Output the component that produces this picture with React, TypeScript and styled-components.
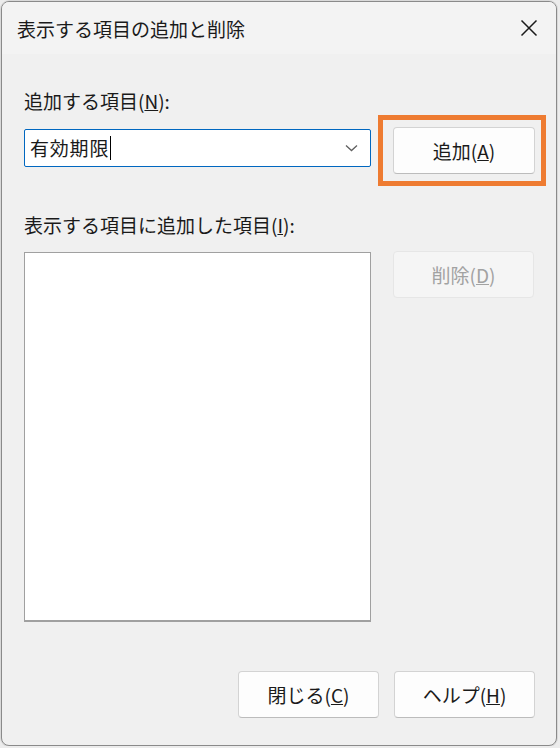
import React from "react";
import styled, { createGlobalStyle } from "styled-components";

const Global = createGlobalStyle`
  html, body { margin: 0; padding: 0; background: #ececec; }
  body { font-family: "Noto Sans CJK JP", "Noto Sans", sans-serif; color: #1b1b1b; }
  * { box-sizing: border-box; }
`;

const Window = styled.div`
  margin: 1px 0 0 1px;
  width: 556px;
  height: 745px;
  border: 1px solid #8a8a8a;
  border-radius: 8px;
  background: #f0f0f0;
  overflow: hidden;
  display: flex;
  flex-direction: column;
  box-shadow: 0 0 0 1px rgba(0, 0, 0, 0.08);
`;

const TitleBar = styled.div`
  height: 52px;
  flex: none;
  display: flex;
  align-items: center;
  justify-content: space-between;
  padding: 0 18px 0 15px;
  background: #f3f3f3;
`;

const Title = styled.div`
  font-size: 19px;
  line-height: 26px;
  color: #1a1a1a;
  margin-top: 2px;
`;

const CloseIcon = styled.svg`
  width: 18px;
  height: 18px;
  display: block;
`;

const Content = styled.div`
  padding: 0 20px 0 22px;
  display: flex;
  flex-direction: column;
`;

const Label = styled.div<{ $top: number }>`
  margin-top: ${(p) => p.$top}px;
  font-size: 19px;
  line-height: 26px;
  color: #1a1a1a;
  white-space: nowrap;
`;

const Row = styled.div<{ $top: number }>`
  margin-top: ${(p) => p.$top}px;
  display: grid;
  grid-template-columns: 347px 142px;
  column-gap: 22px;
  align-items: start;
`;

const Combo = styled.div`
  margin-top: 2px;
  height: 38px;
  background: #ffffff;
  border: 1px solid #0067c0;
  border-radius: 2px;
  display: flex;
  align-items: center;
  padding: 0 12px 0 5px;
`;

const ComboText = styled.div`
  flex: 1;
  font-size: 19px;
  line-height: 26px;
  letter-spacing: 0.8px;
  color: #1a1a1a;
  display: flex;
  align-items: center;
`;

const Caret = styled.span`
  display: inline-block;
  width: 1px;
  height: 24px;
  background: #000;
  margin-left: 1px;
`;

const Chevron = styled.svg`
  width: 13px;
  height: 8px;
  display: block;
`;

const HighlightWrap = styled.div`
  position: relative;
`;

const Highlight = styled.div`
  position: absolute;
  left: -15px;
  top: -12px;
  right: -11px;
  bottom: -12px;
  border: 5px solid #ee7b31;
  pointer-events: none;
`;

const Button = styled.button<{ $disabled?: boolean }>`
  width: 141px;
  height: 47px;
  font-family: inherit;
  font-size: 19px;
  line-height: 26px;
  padding: 0;
  border-radius: 4px;
  border: 1px solid ${(p) => (p.$disabled ? "#e6e6e6" : "#d3d3d3")};
  border-bottom-color: ${(p) => (p.$disabled ? "#e6e6e6" : "#bcbcbc")};
  background: ${(p) => (p.$disabled ? "#f5f5f5" : "#fdfdfd")};
  color: ${(p) => (p.$disabled ? "#a2a2a2" : "#1a1a1a")};
  display: flex;
  align-items: center;
  justify-content: center;
`;

const WideButton = styled(Button)`
  width: 142px;
`;

const ListBox = styled.div`
  margin-top: 1px;
  height: 370px;
  background: #ffffff;
  border: 1px solid #a0a0a0;
  border-bottom-width: 2px;
`;

const Footer = styled.div`
  margin-top: 49px;
  display: flex;
  justify-content: flex-end;
  gap: 15px;
  padding-right: 1px;
`;

export default function App() {
  return (
    <>
      <Global />
      <Window>
        <TitleBar>
          <Title>表示する項目の追加と削除</Title>
          <CloseIcon viewBox="0 0 18 18">
            <path d="M1.5 1.5 L16.5 16.5 M16.5 1.5 L1.5 16.5" stroke="#1a1a1a" strokeWidth="1.5" fill="none" />
          </CloseIcon>
        </TitleBar>
        <Content>
          <Label $top={34}>
            追加する項目(<u>N</u>):
          </Label>
          <Row $top={13}>
            <Combo>
              <ComboText>
                有効期限
                <Caret />
              </ComboText>
              <Chevron viewBox="0 0 13 8">
                <polyline points="1,1.5 6.5,6.5 12,1.5" stroke="#606060" strokeWidth="1.3" fill="none" />
              </Chevron>
            </Combo>
            <HighlightWrap>
              <WideButton>
                追加(<u>A</u>)
              </WideButton>
              <Highlight />
            </HighlightWrap>
          </Row>
          <Label $top={38}>
            表示する項目に追加した項目(<u>I</u>):
          </Label>
          <Row $top={13}>
            <ListBox />
            <Button $disabled>
              削除(<u>D</u>)
            </Button>
          </Row>
          <Footer>
            <Button>
              閉じる(<u>C</u>)
            </Button>
            <Button>
              ヘルプ(<u>H</u>)
            </Button>
          </Footer>
        </Content>
      </Window>
    </>
  );
}
